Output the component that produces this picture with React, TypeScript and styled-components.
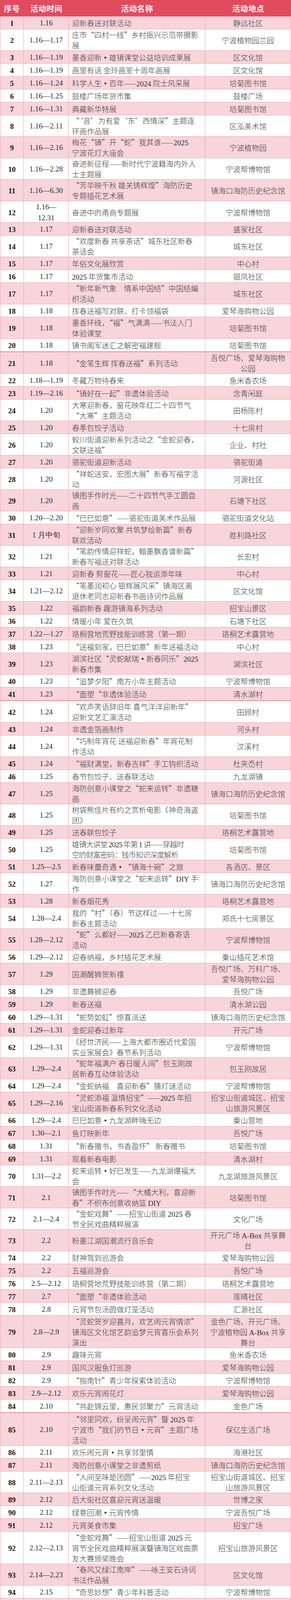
import React from "react";
import styled, { createGlobalStyle } from "styled-components";

const GlobalStyle = createGlobalStyle`
  html, body {
    margin: 0;
    padding: 0;
    background: #ffffff;
    overflow: hidden;
  }
  body {
    font-family: "Liberation Serif", "Noto Sans CJK SC", serif;
  }
`;

const PINK = "#f8d5db";
const LINE = "#e9a6b0";
const RED = "#e24b5f";
const COLS = "61px 115px 349px 219px";
const ROW_H: Record<number, number> = { 1: 33, 2: 55, 3: 83 };
const THICK = new Set([21, 42, 85]);

type Align = "center" | "left";

const Table = styled.div`
  width: 744px;
  display: flex;
  flex-direction: column;
  overflow: hidden;
`;

const HeaderRow = styled.div`
  display: grid;
  grid-template-columns: ${COLS};
  height: 42px;
  flex-shrink: 0;
  background: ${RED};
`;

const HeaderCell = styled.div`
  display: flex;
  align-items: center;
  justify-content: center;
  color: #ffffff;
  font-family: "Noto Sans CJK SC", sans-serif;
  font-weight: 700;
  font-size: 20px;
  letter-spacing: 0.5px;
`;

const Row = styled.div<{ $pink: boolean; $lines: number; $thick: boolean }>`
  display: grid;
  grid-template-columns: ${COLS};
  flex-shrink: 0;
  height: ${(p) => ROW_H[p.$lines] + (p.$thick ? 2 : 0)}px;
  box-sizing: border-box;
  border-top: ${(p) => (p.$thick ? `2px solid ${LINE}` : "none")};
  border-bottom: 1px solid ${LINE};
  background: ${(p) => (p.$pink ? PINK : "#ffffff")};
`;

const Cell = styled.div<{ $align: Align; $first?: boolean; $tight?: boolean }>`
  box-sizing: border-box;
  min-width: 0;
  display: flex;
  flex-direction: column;
  justify-content: center;
  align-items: ${(p) => (p.$align === "center" ? "center" : "flex-start")};
  text-align: ${(p) => p.$align};
  border-right: 1px solid ${LINE};
  border-left: ${(p) => (p.$first ? `1px solid ${LINE}` : "none")};
  padding: ${(p) => (p.$align === "left" ? "0 6px 0 8px" : "0 2px")};
  font-size: 19px;
  line-height: 27px;
  letter-spacing: ${(p) => (p.$tight ? "-0.9px" : "0")};
`;

const Line = styled.div`
  white-space: pre;
  height: 27px;
`;

const NumText = styled.div`
  font-family: "Liberation Serif", serif;
  font-weight: 700;
  color: #141414;
  padding-top: 3px;
`;

const DateLine = styled(Line)`
  font-family: "Liberation Serif", serif;
  color: #2e2e2e;
  padding-top: 1px;
`;

const Cjk = styled.span`
  font-family: "Noto Sans CJK SC", sans-serif;
  font-weight: 300;
  color: #3a3a3a;
`;

const Latin = styled.span`
  font-family: "Liberation Serif", serif;
  color: #2e2e2e;
`;

const Dot = styled.span`
  display: inline-block;
  width: 1em;
  text-align: center;
  font-family: "Noto Sans CJK SC", sans-serif;
  font-weight: 700;
  color: #333;
`;

const RichLine: React.FC<{ text: string }> = ({ text }) => {
  const parts = text.split(/([A-Za-z0-9]+(?:[-.][A-Za-z0-9]+)*|·)/);
  return (
    <Line>
      {parts.map((p, i) => {
        if (p === "") return null;
        if (p === "·") return <Dot key={i}>·</Dot>;
        if (/^[A-Za-z0-9]/.test(p)) return <Latin key={i}>{p}</Latin>;
        return <Cjk key={i}>{p}</Cjk>;
      })}
    </Line>
  );
};

type Item = [string, string, string, boolean?];

const DATA: Item[] = [
  ["1.16", "迎新春送对联活动", "静远社区"],
  ["1.16—1.17", "庄市“四村一线”乡村振兴示范带摄影\n展", "宁波植物园兰园"],
  ["1.16—1.19", "墨香迎新·雄镇课堂公益培训成果展", "区文化馆"],
  ["1.16—1.19", "画里有话 金玲画室十周年画展", "区文化馆"],
  ["1.16—1.24", "科学人生·百年——2024 院士风采展", "培菊图书馆"],
  ["1.16—1.25", "鼓楼广场年货市集", "鼓楼广场"],
  ["1.16—1.31", "典藏新华特展", "培菊图书馆"],
  ["1.16—2.11", "“‘音’为有爱‘东’西情深”主题连\n环画作品展", "区泓美术馆"],
  ["1.16—2.16", "梅花“镇”开“蛇”我其谁——2025\n宁波花灯大庙会", "宁波植物园"],
  ["1.16—2.28", "奋进新征程——新时代宁波籍海内外人\n士主题展", "宁波帮博物馆"],
  ["1.16—6.30", "“芳华映千秋 雄关铸辉煌”海防历史\n专题插花艺术展", "镇海口海防历史纪念馆"],
  ["1.16—\n12.31", "奋进中的甬商专题展", "宁波帮博物馆"],
  ["1.17", "迎新春送对联活动", "盛家社区"],
  ["1.17", "“欢度新春 共享茶话”城东社区新春\n茶话会", "城东社区"],
  ["1.17", "年俗文化展欣赏", "中心村"],
  ["1.17", "2025 年货集市活动", "银凤社区"],
  ["1.17", "“新年新气象　情系中国结”中国结编\n织活动", "城东社区"],
  ["1.18", "挥春送福写对联、打卡领福袋", "爱琴海购物公园"],
  ["1.18", "墨香环绕，“福”气满满——书法入门\n体验课堂", "培菊图书馆"],
  ["1.18", "镇书阁军迷汇之解密福建舰", "培菊图书馆"],
  ["1.18", "“金笔生辉 挥春送福”系列活动", "吾悦广场、爱琴海购物\n公园"],
  ["1.18—1.19", "冬藏万物待春来", "鱼米香农场"],
  ["1.19—2.16", "“镇好在一起”非遗体验活动", "念青闲庭"],
  ["1.20", "大寒迎新春，窗花映年红二十四节气\n“大寒”主题活动", "田杨陈村"],
  ["1.20", "春季包饺子活动", "十七房村"],
  ["1.20", "蛟川街道迎新系列活动之“金蛇迎春，\n文联送福”", "企业、村社"],
  ["1.20", "骆驼街道迎新活动", "骆驼街道"],
  ["1.20", "“祥蛇送安，宏图大展”新春写福字活\n动", "河源社区"],
  ["1.20", "镇图手作时光——二十四节气手工圆盘\n画", "石塘下社区"],
  ["1.20—2.20", "“巳巳如意”——骆驼街道美术作品展", "骆驼街道文化站"],
  ["1 月中旬", "“迎新岁同欢聚 共筑梦绘新篇”新春\n联欢活动", "胜利路社区"],
  ["1.21", "“笔韵传情迎祥蛇，翰墨飘香谱新篇”\n新春写福送对联活动", "长宏村"],
  ["1.21", "迎新春 剪窗花——匠心独运添年味", "中心村"],
  ["1.21—2.12", "“笔墨润初心 银辉展风采”镇海区离\n退休老同志迎新春书画诗词作品展", "区文化馆"],
  ["1.22", "福韵新春 趣游镇海系列活动", "招宝山景区"],
  ["1.22", "情暖小年 爱在久筑", "石塘下社区"],
  ["1.22—1.27", "珞桐营地荒野技能训练营（第一期）", "珞桐艺术露营地"],
  ["1.23", "“送福到家，巳巳如意”新年送福活动", "中心村"],
  ["1.23", "湖滨社区“灵蛇献瑞·新春同乐”2025\n新春市集", "湖滨社区"],
  ["1.23", "“追梦夕阳”南方小年主题活动", "宁波帮博物馆"],
  ["1.23", "“面塑“非遗体验活动", "清水湖村"],
  ["1.24", "“欢声笑语辞旧年 喜气洋洋迎新年”\n迎新文艺汇演活动", "田顾村"],
  ["1.24", "非遗金箔画制作", "河头村"],
  ["1.24", "“巧制年宵花 送福迎新春”年宵花制\n作活动", "汶溪村"],
  ["1.24", "“福财满堂，新春吉祥”手工钩织活动", "杜夹岙村"],
  ["1.25", "春节包饺子、送春联活动", "九龙湖镇"],
  ["1.25", "海防创意小课堂之“蛇来运转”非遗糖\n画", "镇海口海防历史纪念馆"],
  ["1.25", "树袋熊佳片有约之赏析电影《神奇海盗\n团》", "培菊图书馆"],
  ["1.25", "送春联包饺子", "珞桐艺术露营地"],
  ["1.25", "雄镇大讲堂 2025 年第 1 讲——穿越时\n空的财富密码：钱币知识深度解析", "培菊图书馆", true],
  ["1.25—2.5", "新春味蕾奇遇·“镇海十碗”之旅", "各酒店、景区"],
  ["1.27", "海防创意小课堂之“蛇来运转”DIY 手\n作", "镇海口海防历史纪念馆"],
  ["1.28", "新春烟花秀", "珞桐艺术露营地"],
  ["1.28—2.4", "我的“村”（春）节这样过——十七房\n新春主题活动", "郑氏十七房景区"],
  ["1.28—2.12", "“蛇”么都好——2025 乙巳新春寄语\n活动", "宁波帮博物馆"],
  ["1.29—2.12", "迎春纳福，乡村插花艺术展", "秦山插花艺术馆"],
  ["1.29", "国潮醒狮贺新禧", "吾悦广场、万科广场、\n爱琴海购物公园"],
  ["1.29", "非遗舞狮迎春", "吾悦广场"],
  ["1.29", "新春送福", "清水湖公园"],
  ["1.29—1.31", "“蛇势如虹”惊喜派送", "镇海口海防历史纪念馆"],
  ["1.29—1.31", "金蛇迎春过新年", "开元广场"],
  ["1.29—1.31", "《经世济民——上海大都市圈近代爱国\n实业家展会》春节系列活动", "宁波帮博物馆"],
  ["1.29—2.4", "“蛇年福满户 春日暖人间”包玉刚故\n居新春互动体验活动", "包玉刚故居"],
  ["1.29—2.4", "“金蛇纳福　喜迎新春”猜灯谜活动", "宁波帮博物馆"],
  ["1.29—2.16", "“灵蛇添福 温情招宝”——2025 年招\n宝山街道新春系列文化活动", "招宝山街道城区、招宝\n山旅游风景区"],
  ["1.29—2.4", "巳巳如意·九龙湖畔嗨无边", "秦山营地"],
  ["1.30—2.1", "鱼灯映新年", "吾悦广场"],
  ["1.31", "“新春赠书，书香盈怀” 新春赠书", "培菊图书馆"],
  ["1.31", "观看新春电影", "清水湖村"],
  ["1.31—2.2", "蛇来运转·好巳发生——九龙湖爆福大\n会", "九龙湖旅游风景区"],
  ["2.1", "镇图手作时光——“大橘大利，喜迎新\n春”不织布创意收纳篮 DIY", "培菊图书馆"],
  ["2.1—2.4", "“金蛇戏舞”——招宝山街道 2025 春\n节全民戏曲精粹展演", "文化广场"],
  ["2.2", "粉墨江湖国潮流行音乐会", "开元广场 A-Box 共享舞\n台"],
  ["2.2", "财神驾到巡游会", "爱琴海购物公园"],
  ["2.2", "五福巡游会", "吾悦广场"],
  ["2.5—2.12", "珞桐营地荒野技能训练营（第二期）", "珞桐艺术露营地"],
  ["2.7", "“面塑“非遗体验活动", "莲晴社区"],
  ["2.8", "元宵节包汤圆做灯笼活动", "汇源社区"],
  ["2.8—2.9", "“灵蛇贺岁迎嘉月，欢艺闹元宵情浓”\n镇海区文化馆艺韵追梦元宵喜乐会系列\n演出", "金色广场、开元广场、\n宁波植物园 A-Box 共享\n舞台"],
  ["2.9", "趣味元宵", "鱼米香农场"],
  ["2.9", "国风汉服鱼灯巡游", "爱琴海购物公园"],
  ["2.9", "“指南针”青少年探索体验活动", "宁波帮博物馆"],
  ["2.9—2.12", "欢乐元宵闹花灯", "爱琴海购物公园"],
  ["2.10", "“共赴锦云里，惠民邻聚力”元宵活动", "金色广场"],
  ["2.10", "“邻里同欢，纷呈闹元宵”暨 2025 年\n宁波市“我们的节日·元宵”主题广场\n活动", "保亿生活广场"],
  ["2.11", "欢乐闹元宵·共享邻里情", "海港社区"],
  ["2.11", "海防创意小课堂之非遗剪纸", "镇海口海防历史纪念馆"],
  ["2.11—2.13", "“人间至味是团圆”——2025 年招宝\n山街道元宵系列文化活动", "招宝山街道城区、招宝\n山旅游风景区"],
  ["2.12", "后大街社区喜迎元宵送温暖", "世博之家"],
  ["2.12", "绿意回潮·元宵传情", "宁波吾悦广场"],
  ["2.12", "元宵美食市集", "招宝广场"],
  ["2.12—2.13", "“金蛇戏舞”——招宝山街道 2025 元\n宵节全民戏曲精粹展演暨镇海区戏曲票\n友大赛颁奖晚会", "招宝山旅游风景区"],
  ["2.14—2.23", "“春风又绿江南岸”——咏王安石诗词\n书法作品展", "区文化馆"],
  ["2.15", "“奇思妙想”青少年科普活动", "宁波帮博物馆"],
  ["2.15", "青年交友会", "吾悦广场"],
];

const lineCount = (...texts: string[]) =>
  Math.max(...texts.map((t) => t.split("\n").length));

export default function App() {
  return (
    <>
      <GlobalStyle />
      <Table>
        <HeaderRow>
          <HeaderCell>序号</HeaderCell>
          <HeaderCell>活动时间</HeaderCell>
          <HeaderCell>活动名称</HeaderCell>
          <HeaderCell>活动地点</HeaderCell>
        </HeaderRow>
        {DATA.map(([time, name, place, tight], i) => (
          <Row
            key={i}
            $pink={i % 2 === 0}
            $lines={lineCount(time, name, place)}
            $thick={THICK.has(i + 1)}
          >
            <Cell $align="center" $first>
              <NumText>{i + 1}</NumText>
            </Cell>
            <Cell $align="center">
              {time.split("\n").map((t, k) => (
                <DateLine key={k}>{t}</DateLine>
              ))}
            </Cell>
            <Cell $align="left" $tight={tight}>
              {name.split("\n").map((t, k) => (
                <RichLine key={k} text={t} />
              ))}
            </Cell>
            <Cell $align="center">
              {place.split("\n").map((t, k) => (
                <RichLine key={k} text={t} />
              ))}
            </Cell>
          </Row>
        ))}
      </Table>
    </>
  );
}
